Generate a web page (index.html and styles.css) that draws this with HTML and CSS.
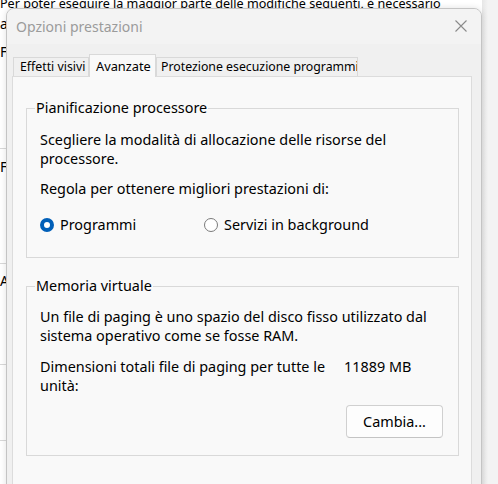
FILE: index.html
```html
<!DOCTYPE html>
<html lang="it">
<head>
<meta charset="utf-8">
<link rel="stylesheet" href="styles.css">
</head>
<body>
<div class="parent">
  <div class="parent-text top">Per poter eseguire la maggior parte delle modifiche seguenti, è necessario</div>
  <div class="parent-text l2">a</div>
  <div class="parent-text l3">F</div>
  <div class="parent-text l4">F</div>
  <div class="parent-text l5">A</div>
  <div class="pline p1"></div>
  <div class="pline p2"></div>
  <div class="pline p3"></div>
  <div class="pline p4"></div>
  <div class="rstrip"></div>
</div>
<div class="dialog">
  <div class="titlebar">
    <span class="title">Opzioni prestazioni</span>
    <svg class="close" width="12" height="12" viewBox="0 0 12 12"><path d="M0.5 0.5 L11.5 11.5 M11.5 0.5 L0.5 11.5" stroke="#8a8a8a" stroke-width="1.1" fill="none"/></svg>
  </div>
  <div class="body">
    <div class="tabs">
      <div class="tab t1">Effetti visivi</div>
      <div class="tab sel">Avanzate</div>
      <div class="tab t3">Protezione esecuzione programmi</div>
    </div>
    <div class="panel">
      <fieldset class="group g1">
        <legend>Pianificazione processore</legend>
        <p class="txt first">Scegliere la modalità di allocazione delle risorse del processore.</p>
        <p class="txt second">Regola per ottenere migliori prestazioni di:</p>
        <div class="radios">
          <label class="radio"><span class="dot on"></span>Programmi</label>
          <label class="radio r2"><span class="dot"></span>Servizi in background</label>
        </div>
      </fieldset>
      <fieldset class="group g2">
        <legend>Memoria virtuale</legend>
        <p class="txt first">Un file di paging è uno spazio del disco fisso utilizzato dal sistema operativo come se fosse RAM.</p>
        <div class="sizes">
          <p class="txt lbl">Dimensioni totali file di paging per tutte le unità:</p>
          <span class="val">11889 MB</span>
        </div>
        <div class="btnrow"><button class="btn">Cambia...</button></div>
      </fieldset>
    </div>
  </div>
</div>
</body>
</html>
```

FILE: styles.css
```css
html, body {
  margin: 0;
  padding: 0;
}
body {
  width: 498px;
  height: 484px;
  overflow: hidden;
  position: relative;
  background: #ffffff;
  font-family: "Noto Sans", "Open Sans", sans-serif;
  font-size: 14.4px;
  color: #000;
}
.parent {
  position: absolute;
  inset: 0;
}
.parent-text {
  position: absolute;
  left: 0;
  font-size: 14px;
  line-height: 18px;
  color: #000;
}
.parent-text.top {
  top: -5px;
  white-space: nowrap;
  font-size: 12.6px;
}
.parent-text.l2 { top: 15px; }
.parent-text.l3 { top: 43px; }
.parent-text.l4 { top: 158px; }
.parent-text.l5 { top: 272px; }
.pline {
  position: absolute;
  left: 0;
  width: 6px;
  height: 1px;
  background: #d8d8d8;
}
.p1 { top: 148px; }
.p2 { top: 263px; }
.p3 { top: 364px; }
.p4 { top: 440px; }
.rstrip {
  position: absolute;
  right: 0;
  top: 0;
  width: 16px;
  height: 484px;
  background: linear-gradient(to right, #e6e6e6, #f3f3f3 6px, #f3f3f3);
}
.dialog {
  position: absolute;
  left: 6px;
  top: 8px;
  width: 474px;
  height: 490px;
  border: 1px solid #c4c4c4;
  border-radius: 8px 8px 0 0;
  background: #f0f0f0;
  box-shadow: 0 0 6px rgba(0,0,0,0.12);
  overflow: hidden;
  display: flex;
  flex-direction: column;
}
.titlebar {
  height: 35px;
  background: #f3f3f3;
  display: flex;
  align-items: center;
  justify-content: space-between;
  padding: 0 14px 0 9px;
}
.title {
  font-size: 14px;
  color: #9b9b9b;
  margin-top: -1px;
}
.close { margin-top: -2px; }
.body {
  flex: 1;
  background: #f0f0f0;
  padding: 9px 9px 0 5px;
}
.tabs {
  display: flex;
  align-items: flex-end;
  height: 23px;
  padding-left: 1px;
}
.tab {
  height: 19px;
  box-sizing: border-box;
  border: 1px solid #d9d9d9;
  border-bottom: none;
  background: #f0f0f0;
  padding: 0 0 0 6px;
  font-size: 12.3px;
  line-height: 18px;
  white-space: nowrap;
  overflow: hidden;
}
.tab.t1 { width: 76px; }
.tab.sel {
  height: 23px;
  background: #f9f9f9;
  width: 67px;
  margin-bottom: -1px;
  position: relative;
  z-index: 1;
  padding-top: 2px;
  font-size: 12.8px;
}
.tab.t3 { width: 202px; padding-left: 4px; }
.panel {
  background: #f9f9f9;
  border: 1px solid #dcdcdc;
  height: 420px;
  padding: 22px 12px 0 13px;
  box-sizing: border-box;
}
.group {
  margin: 0;
  border: 1px solid #d9d9d9;
  padding: 0 12px 0 13px;
  min-width: 0;
  box-sizing: border-box;
}
.group legend {
  padding: 0 1px;
  margin-left: -5px;
  font-size: 14.4px;
  line-height: 18px;
}
.g1 { height: 159px; }
.g2 { height: 179px; margin-top: 19px; }
.txt {
  margin: 0;
  line-height: 19px;
}
.txt.first { margin-top: 13px; }
.second { margin-top: 11px; }
.radios {
  display: flex;
  margin-top: 17px;
  align-items: center;
}
.radio {
  display: flex;
  align-items: center;
  width: 164px;
  white-space: nowrap;
  flex-shrink: 0;
}
.dot {
  width: 14px;
  height: 14px;
  box-sizing: border-box;
  border-radius: 50%;
  border: 1px solid #7a7a7a;
  background: #fff;
  margin-right: 6px;
  flex-shrink: 0;
}
.dot.on {
  border: 4px solid #005fb8;
  background: #fff;
}
.g2 .txt.first { margin-top: 12px; }
.sizes {
  display: flex;
  margin-top: 12px;
}
.lbl { width: 290px; }
.val { margin-left: 14px; line-height: 19px; }
.btnrow {
  display: flex;
  justify-content: flex-end;
  margin-top: 10px;
  padding-right: 3px;
}
.btn {
  width: 97px;
  height: 33px;
  border: 1px solid #d0d0d0;
  border-bottom-color: #c4c4c4;
  border-radius: 4px;
  background: #fdfdfd;
  font-family: inherit;
  font-size: 14.4px;
  color: #000;
}
```
